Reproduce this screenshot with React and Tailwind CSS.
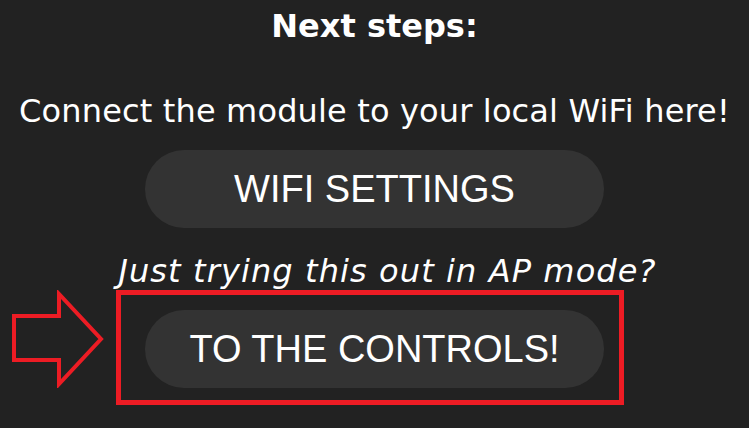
import React from "react";

function Arrow() {
  return (
    <svg
      className="absolute left-[-136px] top-[-20px]"
      width="96"
      height="98"
      viewBox="0 0 96 98"
      fill="none"
    >
      <polygon
        points="5,26 50,26 50,4 92,49 50,94 50,70 5,70"
        stroke="#ed1c24"
        strokeWidth="4"
        strokeLinejoin="miter"
      />
    </svg>
  );
}

export default function App() {
  return (
    <div className="w-full h-screen bg-[#222222] text-white flex flex-col items-center overflow-hidden font-['DejaVu_Sans',sans-serif]">
      {/* heading */}
      <h2 className="text-[32px] leading-[52px] font-bold">Next steps:</h2>

      <p className="mt-[39px] text-[32px] leading-[40px] tracking-[0.15px]">
        Connect the module to your local WiFi here!
      </p>

      <button className="mt-[19px] w-[459px] h-[78px] rounded-full bg-[#333333] text-[38px] leading-[78px] font-['Liberation_Sans',Arial,sans-serif]">
        WIFI SETTINGS
      </button>

      <p className="mt-[23px] ml-[26px] text-[32px] leading-[40px] italic tracking-[1.1px]">
        Just trying this out in AP mode?
      </p>

      {/* controls button with the red annotation */}
      <div className="relative mt-[19px]">
        <Arrow />
        <div className="absolute left-[-29px] top-[-20px] right-[-20px] bottom-[-17px] border-[5px] border-[#ed1c24]" />
        <button className="w-[459px] h-[78px] rounded-full bg-[#333333] text-[38px] leading-[78px] font-['Liberation_Sans',Arial,sans-serif]">
          TO THE CONTROLS!
        </button>
      </div>
    </div>
  );
}
